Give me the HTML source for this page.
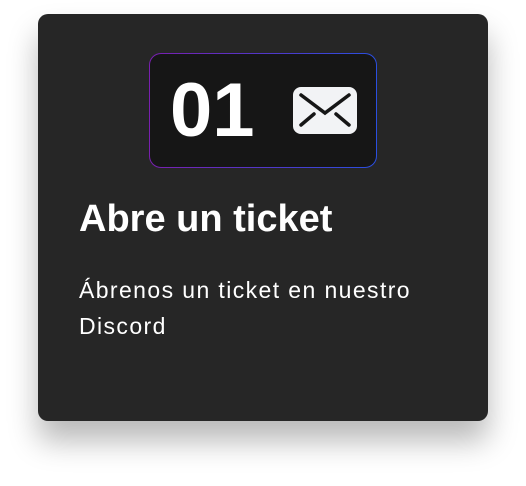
<!DOCTYPE html>
<html><head><meta charset="utf-8"><style>
body{margin:0;width:526px;height:486px;background:#fff;position:relative;overflow:hidden;font-family:"Liberation Sans",sans-serif}
.card{position:absolute;left:38px;top:14px;width:450px;height:407px;background:#262626;border-radius:10px;box-shadow:0 20px 30px rgba(0,0,0,.28)}
.box{position:absolute;left:149px;top:53px;width:228px;height:115px;border-radius:12px;padding:1px;box-sizing:border-box;background:linear-gradient(90deg,#7a1fb0,#2a4fe0)}
.in{width:100%;height:100%;background:#161616;border-radius:11px;position:relative}
.num{position:absolute;left:20px;top:12px;font-size:76px;font-weight:bold;color:#fff;letter-spacing:0px;line-height:90px}
.env{position:absolute;left:143px;top:33px}
h1{position:absolute;left:79px;top:195px;margin:0;font-size:38px;font-weight:bold;color:#fff;letter-spacing:0px;line-height:48px}
p{position:absolute;left:79px;top:272px;margin:0;font-size:23px;color:#fff;line-height:36px;letter-spacing:1.4px}
</style></head><body>
<div class="card"></div>
<div class="box"><div class="in">
<div class="num">01</div>
<svg class="env" width="65" height="48" viewBox="0 0 65 48"><rect x="0" y="0" width="64" height="47" rx="8" fill="#f2f3f5"/><path d="M8 8 L32 26 L56 8 M8 38 L21 27 M56 38 L43 27" stroke="#161616" stroke-width="3.5" stroke-linecap="round" fill="none"/></svg>
</div></div>
<h1>Abre un ticket</h1>
<p>Ábrenos un ticket en nuestro<br>Discord</p>
</body></html>
